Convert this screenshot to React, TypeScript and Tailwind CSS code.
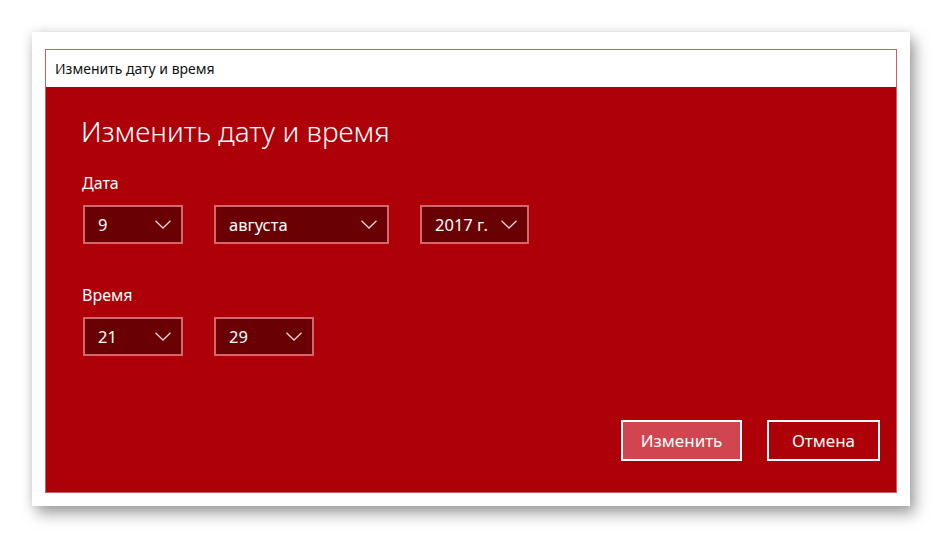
import React from "react";

const Chevron = () => (
  <svg width="16" height="9" viewBox="0 0 16 9" className="shrink-0">
    <polyline
      points="0.5,0.8 8,8 15.5,0.8"
      fill="none"
      stroke="#f3d6d7"
      strokeWidth="1.3"
    />
  </svg>
);

type SelectProps = { value: string; width: string };

const Select = ({ value, width }: SelectProps) => (
  <div
    className={`${width} h-[39px] border-2 border-[#d2676c] bg-[#680004] flex items-center justify-between pl-[13px] pr-[10px] text-white text-[16.5px] leading-[20px]`}
  >
    <span>{value}</span>
    <Chevron />
  </div>
);

const App = () => {
  return (
    <div
      className="w-[942px] h-[539px] bg-white pt-[32px] pl-[32px]"
      style={{ fontFamily: '"Noto Sans", "Open Sans", sans-serif' }}
    >
      <div className="w-[878px] h-[474px] bg-white pt-[17px] px-[13px] pb-[13px] shadow-[0_0_10px_rgba(0,0,0,0.12),5px_8px_14px_rgba(0,0,0,0.35)]">
        <div className="w-full h-full border border-[#d25e63] flex flex-col">
          <div className="h-[37px] bg-white flex items-center pl-[9px] text-[14px] text-[#111]">
            Изменить дату и время
          </div>
          <div className="flex-1 bg-[#ad0008] flex flex-col pl-[37px] pr-[16px] pb-[31px] text-white">
            <h1 className="mt-[26px] -ml-[2px] text-[28px] leading-[36px] font-light">
              Изменить дату и время
            </h1>
            <div className="mt-[24px] -ml-[1px] text-[16px] leading-[20px]">Дата</div>
            <div className="mt-[12px] flex gap-[31px]">
              <Select value="9" width="w-[100px]" />
              <Select value="августа" width="w-[175px]" />
              <Select value="2017 г." width="w-[109px]" />
            </div>
            <div className="mt-[41px] -ml-[1px] text-[16px] leading-[20px]">Время</div>
            <div className="mt-[12px] flex gap-[31px]">
              <Select value="21" width="w-[100px]" />
              <Select value="29" width="w-[100px]" />
            </div>
            <div className="flex-1" />
            <div className="flex justify-end gap-[25px]">
              <button className="w-[121px] h-[41px] border-2 border-white bg-[#d0454f] text-[17px] text-white">
                Изменить
              </button>
              <button className="w-[113px] h-[41px] border-2 border-white bg-transparent text-[17px] text-white">
                Отмена
              </button>
            </div>
          </div>
        </div>
      </div>
    </div>
  );
};

export default App;
